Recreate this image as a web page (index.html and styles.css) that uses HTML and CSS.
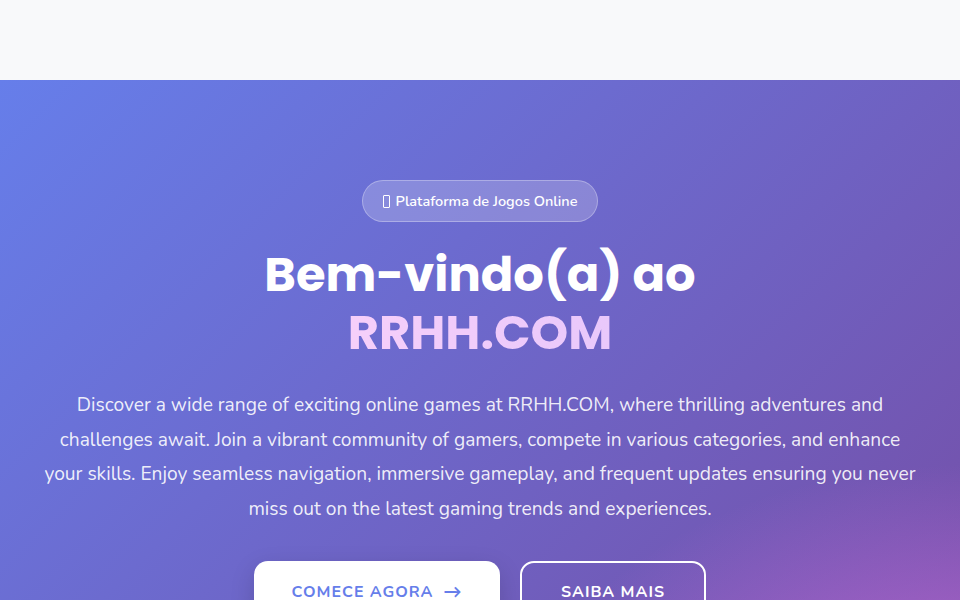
FILE: index.html
```html
<!DOCTYPE html>
<html lang="pt">
<head>
<meta charset="utf-8">
<title>RRHH.COM</title>
<link rel="stylesheet" href="styles.css">
</head>
<body>
<header class="topbar"></header>
<section class="hero">
  <div class="hero-inner">
    <div class="badge"><span class="tofu"></span> Plataforma de Jogos Online</div>
    <h1 class="title">Bem-vindo(a) ao<br><span class="brand">RRHH.COM</span></h1>
    <p class="lead">Discover a wide range of exciting online games at RRHH.COM, where thrilling adventures and challenges await. Join a vibrant community of gamers, compete in various categories, and enhance your skills. Enjoy seamless navigation, immersive gameplay, and frequent updates ensuring you never miss out on the latest gaming trends and experiences.</p>
    <div class="actions">
      <a class="btn btn-primary" href="#">Comece agora <span class="arrow">&#8594;</span></a>
      <a class="btn btn-outline" href="#">Saiba mais</a>
    </div>
  </div>
</section>
</body>
</html>
```
FILE: styles.css
```css
* { box-sizing: border-box; }
html, body { margin: 0; padding: 0; }
body {
  font-family: "Nunito", "Lato", "Noto Sans", sans-serif;
  background: #f8f9fa;
  overflow: hidden;
}
.topbar {
  height: 80px;
  background: #f8f9fa;
}
.hero {
  min-height: 700px;
  background:
    radial-gradient(ellipse 600px 420px at 100% 100%, rgba(200, 110, 220, 0.95), rgba(200, 110, 220, 0) 75%),
    linear-gradient(135deg, #667eea 0%, #764ba2 100%);
  color: #fff;
}
.hero-inner {
  max-width: 880px;
  margin: 0 auto;
  padding: 100px 0 0;
  display: flex;
  flex-direction: column;
  align-items: center;
  text-align: center;
}
.badge {
  display: inline-flex;
  align-items: center;
  gap: 4px;
  height: 42px;
  padding: 0 20px;
  border-radius: 50px;
  background: rgba(255, 255, 255, 0.2);
  border: 1px solid rgba(255, 255, 255, 0.3);
  font-size: 14.5px;
  font-weight: 600;
  color: #fff;
}
.tofu {
  display: inline-block;
  width: 7px;
  height: 13px;
  border: 1px solid #fff;
  border-radius: 1px;
  margin-right: 2px;
}
.title {
  margin: 24px 0 0;
  font-family: "Poppins", "DejaVu Sans", sans-serif;
  font-weight: 700;
  font-size: 48px;
  line-height: 58px;
}
.brand {
  background: linear-gradient(90deg, #f6cffa, #e9c8fb);
  -webkit-background-clip: text;
  background-clip: text;
  color: transparent;
}
.lead {
  margin: 26px 0 0;
  font-size: 19.2px;
  line-height: 34.5px;
  color: rgba(255, 255, 255, 0.9);
}
.actions {
  display: flex;
  gap: 20px;
  margin-top: 35px;
}
.btn {
  display: inline-flex;
  align-items: center;
  justify-content: center;
  gap: 10px;
  height: 62px;
  border-radius: 14px;
  text-decoration: none;
  text-transform: uppercase;
  letter-spacing: 1px;
  font-weight: 700;
  font-size: 16px;
}
.btn-primary {
  width: 246px;
  background: #fff;
  color: #667eea;
  box-shadow: 0 8px 24px rgba(0, 0, 0, 0.15);
}
.arrow { font-size: 18px; }
.btn-outline {
  width: 186px;
  border: 2px solid #fff;
  color: #fff;
}
```
